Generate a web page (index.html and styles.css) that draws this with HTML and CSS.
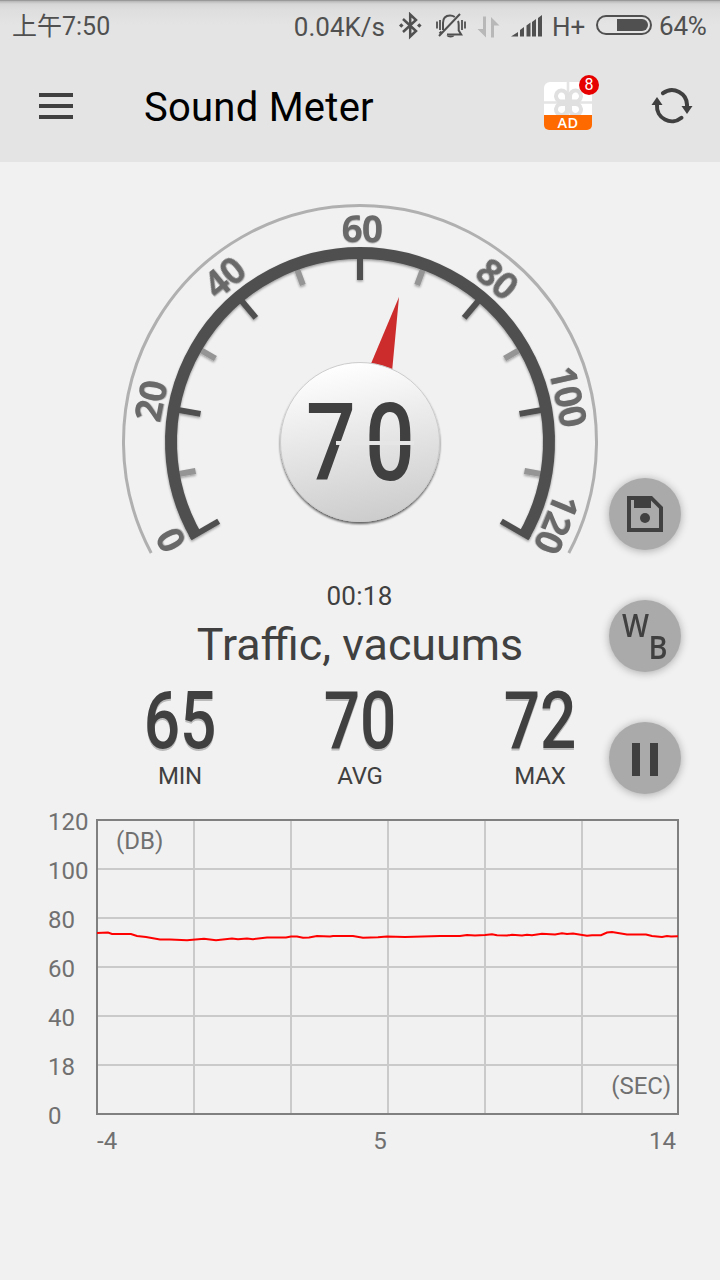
FILE: index.html
```html
<!DOCTYPE html>
<html lang="en">
<head>
  <meta charset="UTF-8" />
  <title>Sound Meter</title>
  <link rel="stylesheet" href="styles.css">
</head>
<body>
  <div class="screen">
    <div class="status-bar">
      <span class="clock">上午7:50</span>
      <span class="speed">0.04K/s</span>
      <svg class="icon-bt" width="24" height="28" viewBox="0 0 24 28" fill="none" stroke="#505050" stroke-width="2.5">
        <path d="M4 7 17 19 11.2 24.5V2.5L17 8 4 20" />
        <path d="M0 13.5 2.3 11.2 4.600 13.5 2.3 15.800ZM18 13.5 20.3 11.2 22.600 13.5 20.3 15.800Z" fill="#505050" stroke="none" />
      </svg>
      <svg class="icon-bell" width="30" height="28" viewBox="0 0 30 28" fill="none" stroke="#505050" stroke-width="2">
        <path d="M1 8.5v7M4 7v10M26 7v10M29 8.5v7" stroke-width="1.8" />
        <path d="M7 17V10C7 5 10 2.500 14 2.500c2 0 3.500.5 4.800 1.500M22 8c.5 1 .7 2 .7 4v5.500l2.500 4H11M24 1 3 23M3.500 20.500l2-2" />
        <path d="M10.5 22.5h8c-.8 2.600-7 2.600-8 0z" fill="#505050" stroke="none" />
      </svg>
      <svg class="icon-data" width="24" height="24" viewBox="0 0 24 24" fill="#b8b8b8">
        <path d="M6 1.5h3V22.500L.5 14H6zM14 22.500h3V10.500h5.500L14 2z" />
      </svg>
      <svg class="icon-signal" width="32" height="22" viewBox="0 0 32 22" fill="#505050">
        <path d="M0 21.500 7 17v4.500zM9 15l4-3v9.500H9zM15.500 10.500l4-3v14h-4zM21 7l4-3v17.500h-4zM27 3l4-3v21.500h-4z" />
      </svg>
      <span class="network">H+</span>
      <svg class="icon-battery" width="56" height="20" viewBox="0 0 56 20">
        <rect x="1" y="1" width="54" height="18" rx="9" fill="none" stroke="#505050" stroke-width="2" />
        <path d="M21 4h25a6 6 0 0 1 0 12H21z" fill="#505050" />
      </svg>
      <span class="percent">64%</span>
    </div>

    <div class="app-bar">
      <svg class="menu" width="34" height="26" viewBox="0 0 34 26" fill="#404040">
        <rect width="34" height="4" />
        <rect y="11" width="34" height="4" />
        <rect y="22" width="34" height="4" />
      </svg>
      <h1>Sound Meter</h1>
      <div class="gift">
        <svg width="48" height="33" viewBox="0 0 48 33">
          <path d="M0 33V6a6 6 0 0 1 6-6h36a6 6 0 0 1 6 6v27z" fill="#fff" />
          <path d="M24 0v33M0 20.500h48" stroke="#e4e4e4" stroke-width="2.600" />
          <g fill="none" stroke="#e0e0e0" stroke-width="4">
            <path d="M23 19.500h-4.500a5.500 5.500 0 1 1 4.500-5.500zM26 19.500h4.500a5.500 5.500 0 1 0-4.500-5.500zM23 22h-4.500a5.500 5.500 0 1 0 4.500 5.500zM26 22h4.500a5.500 5.500 0 1 1-4.500 5.500z" />
          </g>
        </svg>
        <span class="ad">AD</span>
        <span class="badge">8</span>
      </div>
      <svg class="refresh" width="42" height="38" viewBox="0 0 42 38">
        <g fill="none" stroke="#404040" stroke-width="4" stroke-linecap="round">
          <path d="M12 6.200A15 15 0 0 1 36 19" />
          <path d="M30.500 30.800A15 15 0 0 1 6 18" />
        </g>
        <path d="M30.500 19h11L36 27zM.5 18h11L6 10z" fill="#404040" />
      </svg>
    </div>

    <div class="meter">
      <svg width="720" height="408" viewBox="0 162 720 408">
        <defs>
          <linearGradient id="knob" x1="0.4" y1="0" x2="0.6" y2="1">
            <stop offset="0" stop-color="#ffffff" />
            <stop offset="1" stop-color="#cccccc" />
          </linearGradient>
          <filter id="soft" x="-10%" y="-10%" width="120%" height="120%">
            <feDropShadow dx="0" dy="1.5" stdDeviation="1.2" flood-color="#000" flood-opacity="0.35" />
          </filter>
          <filter id="knob-shadow" x="-10%" y="-10%" width="120%" height="120%">
            <feDropShadow dx="0" dy="2" stdDeviation="1.2" flood-color="#000" flood-opacity="0.6" />
          </filter>
        </defs>
        <g transform="translate(360 442)">
          <path class="outer" d="M-208.800 111A236.500 236.500 0 1 1 208.800 111" />
          <g filter="url(#soft)">
            <g class="small-ticks">
              <path d="M0-185V-167" transform="rotate(-100)" />
              <path d="M0-185V-167" transform="rotate(-60)" />
              <path d="M0-185V-167" transform="rotate(-20)" />
              <path d="M0-185V-167" transform="rotate(20)" />
              <path d="M0-185V-167" transform="rotate(60)" />
              <path d="M0-185V-167" transform="rotate(100)" />
            </g>
            <g class="ticks">
              <path d="M2-195V-162" transform="rotate(-120)" />
              <path d="M0-185V-162" transform="rotate(-80)" />
              <path d="M0-185V-162" transform="rotate(-40)" />
              <path d="M0-185V-162" />
              <path d="M0-185V-162" transform="rotate(40)" />
              <path d="M0-185V-162" transform="rotate(80)" />
              <path d="M-2-195V-162" transform="rotate(120)" />
            </g>
            <path class="ring" d="M-163.700 94.500A189 189 0 1 1 163.700 94.500" />
          </g>
          <g class="scale">
            <text y="-200" transform="rotate(-117.5)">0</text>
            <text y="-200" transform="rotate(-79)">20</text>
            <text y="-200" transform="rotate(-39.5)">40</text>
            <text y="-200" transform="rotate(0.5)">60</text>
            <text y="-200" transform="rotate(40)">80</text>
            <text y="-200" transform="rotate(77.600)">100</text>
            <text y="-200" transform="rotate(112.5)">120</text>
          </g>
          <path d="M39-145 10-76 32-70z" fill="#cc2c2c" />
          <circle r="79.500" fill="url(#knob)" stroke="#ccc" filter="url(#knob-shadow)" />
          <text class="level" x="-35.400 36.600" y="38" transform="scale(0.82 1)">70</text>
          <!-- lcd gaps -->
          <path class="gap" d="M-24 1H54" />
        </g>
      </svg>
    </div>

    <div class="time">00:18</div>
    <div class="noise">Traffic, vacuums</div>

    <div class="stats">
      <div class="stat">
        <div class="digits">65</div>
        <div class="name">MIN</div>
      </div>
      <div class="stat">
        <div class="digits">70</div>
        <div class="name">AVG</div>
      </div>
      <div class="stat">
        <div class="digits">72</div>
        <div class="name">MAX</div>
      </div>
    </div>

    <div class="chart">
      <div class="y-axis">
        <span>120</span><span>100</span><span>80</span><span>60</span><span>40</span><span>18</span><span>0</span>
      </div>
      <svg class="plot" width="583" height="296" viewBox="96 819 583 296">
        <path class="grid" d="M194 820v294M291 820v294M388 820v294M485 820v294M582 820v294M97 869h581M97 918h581M97 967h581M97 1016h581M97 1065h581" />
        <rect class="frame" x="97" y="820" width="581" height="294" />
        <polyline class="line" points="97,933 108,932.5 112,934 131,934 137,936 146,937 160,939.5 170,939.5 187,940.3 204,938.7 216,940.2 232,938.5 238,939.3 247,938.6 253,939.2 267,937.5 286,937.5 291,936.5 297,936.5 303,937.8 309,937.5 317,936 330,936.5 333,936 353,936 363,937.8 378,937.3 387,936.5 405,937 440,936 460,936 467,935 475,935.5 485,935 492,934.3 497,935.3 507,935.6 512,934.7 522,935.6 527,934.8 532,935.3 542,933.8 555,934.4 562,933.2 567,934 573,933.5 587,935.8 592,935.2 601,935.2 607,932.5 612,932 627,934.5 646,934.5 652,936 662,937 667,936 671,936.5 678,936.2" />
        <text x="116" y="849">(DB)</text>
        <text x="671" y="1094" text-anchor="end">(SEC)</text>
      </svg>
      <div class="x-axis">
        <span>-4</span><span class="middle">5</span><span>14</span>
      </div>
    </div>

    <div class="actions">
      <button>
        <svg width="36" height="36" viewBox="0 0 36 36" fill="#404040">
          <path d="M0 0h25l11 11v25H0zM4 4v28h28V12.500L24 4.500V12H7V4z" fill-rule="evenodd" />
          <path d="M7 2h17v10H7zM9 4v6h4V4z" fill-rule="evenodd" />
          <circle cx="18" cy="22" r="5" />
        </svg>
      </button>
      <button>
        <svg class="wb" width="72" height="72" viewBox="0 0 72 72">
          <text x="13" y="37" textLength="27" lengthAdjust="spacingAndGlyphs">W</text>
          <text x="39.500" y="59" textLength="19" lengthAdjust="spacingAndGlyphs">B</text>
        </svg>
      </button>
      <button>
        <svg class="pause" width="26" height="33" viewBox="0 0 26 33" fill="#404040">
          <rect width="8" height="33" />
          <rect x="18" width="8" height="33" />
        </svg>
      </button>
    </div>
  </div>
</body>
</html>
```
FILE: styles.css
```css
body {
  margin: 0;
  background-color: #f1f1f1;
  color: #404040;
  font-family: Roboto, "Noto Sans CJK SC", sans-serif;
}
svg {
  display: block;
  flex: none;
}
.screen {
  position: relative;
  width: 720px;
  height: 1280px;
  overflow: hidden;
}
.status-bar {
  box-sizing: border-box;
  height: 52px;
  padding: 0 13px 0 12px;
  border-top: 1px solid #999;
  background: linear-gradient(#b5b5b5, #d6d6d6 3px, #dedede 9px, #e4e4e4 24px);
  display: flex;
  align-items: center;
  color: #505050;
  font-size: 26px;
  line-height: 50px;
  white-space: nowrap;
}
.clock {
  font-size: 25px;
}
.speed {
  margin-left: auto;
}
.icon-bt {
  margin: 0 13px 2px 14px;
}
.icon-bell {
  margin-right: 11px;
}
.icon-data {
  margin-right: 10px;
}
.icon-signal {
  margin: 0 9px 2px 0;
}
.network {
  width: 36px;
}
.icon-battery {
  margin: 0 7px 3px 8px;
}
.percent {
  width: 48px;
  letter-spacing: -0.2px;
  margin-top: -2px;
}
.app-bar {
  height: 110px;
  padding: 0 27px 2px 39px;
  background-color: #e4e4e4;
  display: flex;
  align-items: center;
  box-sizing: border-box;
}
h1 {
  margin: 3px auto 0 71px;
  color: #000;
  font-size: 40px;
  font-weight: 400;
  letter-spacing: 0.250px;
}
.gift {
  position: relative;
  width: 48px;
  height: 48px;
  margin-right: 59px;
}
.ad {
  display: block;
  height: 15px;
  border-radius: 0 0 5px 5px;
  background-color: #ff6a00;
  color: #fff;
  font: 600 14.5px/16px "Open Sans", sans-serif;
  text-align: center;
  letter-spacing: 0.5px;
}
.badge {
  position: absolute;
  top: -7px;
  right: -7px;
  width: 20px;
  height: 20px;
  border-radius: 50%;
  background-color: #e60000;
  color: #fff;
  font-size: 16px;
  line-height: 20px;
  text-align: center;
}
.outer {
  fill: none;
  stroke: #b0b0b0;
  stroke-width: 3;
}
.ring {
  fill: none;
  stroke: #505050;
  stroke-width: 12;
}
.ticks {
  stroke: #505050;
  stroke-width: 6;
}
.small-ticks {
  stroke: #959595;
  stroke-width: 6;
}
.scale {
  fill: #696969;
  font: 700 37px "Noto Sans", sans-serif;
  text-anchor: middle;
  letter-spacing: -1px;
  text-shadow: 0 1px 1px rgba(0,0,0,0.3);
}
.level {
  fill: #404040;
  font-size: 107px;
  font-weight: 500;
  text-anchor: middle;
}
.gap {
  stroke: #e6e6e6;
  stroke-width: 4;
}
.time {
  margin-top: 10px;
  font-size: 26px;
  line-height: 32px;
  text-align: center;
  letter-spacing: 0.3px;
  text-indent: -1px;
}
.noise {
  margin-top: 5px;
  font-size: 44.800px;
  line-height: 56px;
  text-align: center;
}
.stats {
  width: 540px;
  margin: 12px auto 0;
  display: grid;
  grid-template-columns: repeat(3, 1fr);
  text-align: center;
}
.digits {
  font-size: 80px;
  font-weight: 500;
  line-height: 72px;
  transform: scaleX(0.8);
  text-shadow: 0 2px 0 #bbb;
}
.name {
  margin-top: 4px;
  font-size: 24px;
  line-height: 30px;
  letter-spacing: -0.2px;
}
.chart {
  margin: 28px 41px 0 48px;
  display: grid;
  grid-template-columns: 48px 583px;
  color: #707070;
  font-size: 24px;
}
.y-axis {
  display: flex;
  flex-direction: column;
  line-height: 49px;
  margin-top: -21px;
}
.plot {
  overflow: visible;
}
.plot text {
  fill: #707070;
  font-size: 24px;
}
.grid {
  stroke: #aaa;
  stroke-opacity: 0.55;
  stroke-width: 2;
}
.frame {
  fill: none;
  stroke: #808080;
  stroke-width: 2;
}
.line {
  fill: none;
  stroke: #ff0000;
  stroke-width: 2;
}
.x-axis {
  grid-column: 2;
  display: flex;
  justify-content: space-between;
  padding: 0 3px 0 1px;
  line-height: 30px;
  margin-top: -15px;
}
.middle {
  margin-right: 6px;
}
.actions {
  position: absolute;
  top: 478px;
  right: 39px;
  display: flex;
  flex-direction: column;
  gap: 50px;
}
button {
  width: 72px;
  height: 72px;
  padding: 0;
  border: none;
  border-radius: 50%;
  background-color: #aaa;
  box-shadow: 0 1px 8px rgba(0,0,0,0.3);
  display: flex;
  align-items: center;
  justify-content: center;
}
.pause {
  margin-top: 3px;
}
.wb text {
  fill: #404040;
  font: 600 32px "Open Sans", sans-serif;
}
```
